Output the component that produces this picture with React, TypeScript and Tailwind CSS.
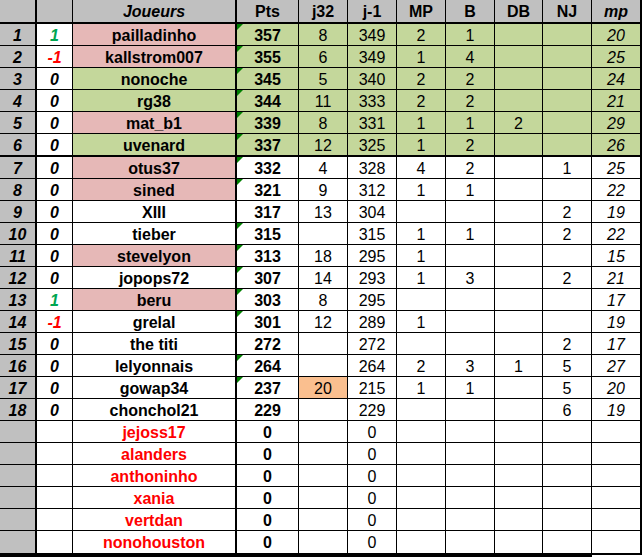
import React from 'react';

// column widths include the right border of each cell
const colW = [
  'w-[37px] border-r-2',
  'w-[36px] border-r',
  'w-[164px] border-r-2',
  'w-[62px] border-r',
  'w-[49px] border-r',
  'w-[49px] border-r',
  'w-[49px] border-r',
  'w-[49px] border-r',
  'w-[48px] border-r',
  'w-[49px] border-r',
  'w-[50px] border-r-2',
];

const PINK = 'bg-[#e6b8b7]';
const GREEN = 'bg-[#c4d79b]';
const GRAY = 'bg-[#c0c0c0]';

type Row = {
  ch: string;
  name: string;
  nameBg: string;
  cells: string[]; // pts, j32, j-1, MP, B, DB, NJ, mp
  top?: boolean;
  tri?: boolean;
  orange?: boolean;
};

const rows: Row[] = [
  { ch: '1', name: 'pailladinho', nameBg: PINK, cells: ['357', '8', '349', '2', '1', '', '', '20'], top: true, tri: true },
  { ch: '-1', name: 'kallstrom007', nameBg: PINK, cells: ['355', '6', '349', '1', '4', '', '', '25'], top: true, tri: true },
  { ch: '0', name: 'nonoche', nameBg: GREEN, cells: ['345', '5', '340', '2', '2', '', '', '24'], top: true, tri: true },
  { ch: '0', name: 'rg38', nameBg: GREEN, cells: ['344', '11', '333', '2', '2', '', '', '21'], top: true, tri: true },
  { ch: '0', name: 'mat_b1', nameBg: PINK, cells: ['339', '8', '331', '1', '1', '2', '', '29'], top: true, tri: true },
  { ch: '0', name: 'uvenard', nameBg: GREEN, cells: ['337', '12', '325', '1', '2', '', '', '26'], top: true, tri: true },
  { ch: '0', name: 'otus37', nameBg: PINK, cells: ['332', '4', '328', '4', '2', '', '1', '25'], tri: true },
  { ch: '0', name: 'sined', nameBg: PINK, cells: ['321', '9', '312', '1', '1', '', '', '22'], tri: true },
  { ch: '0', name: 'XIII', nameBg: 'bg-white', cells: ['317', '13', '304', '', '', '', '2', '19'] },
  { ch: '0', name: 'tieber', nameBg: 'bg-white', cells: ['315', '', '315', '1', '1', '', '2', '22'], tri: true },
  { ch: '0', name: 'stevelyon', nameBg: PINK, cells: ['313', '18', '295', '1', '', '', '', '15'], tri: true },
  { ch: '0', name: 'jopops72', nameBg: 'bg-white', cells: ['307', '14', '293', '1', '3', '', '2', '21'], tri: true },
  { ch: '1', name: 'beru', nameBg: PINK, cells: ['303', '8', '295', '', '', '', '', '17'], tri: true },
  { ch: '-1', name: 'grelal', nameBg: 'bg-white', cells: ['301', '12', '289', '1', '', '', '', '19'], tri: true },
  { ch: '0', name: 'the titi', nameBg: 'bg-white', cells: ['272', '', '272', '', '', '', '2', '17'] },
  { ch: '0', name: 'lelyonnais', nameBg: 'bg-white', cells: ['264', '', '264', '2', '3', '1', '5', '27'], tri: true },
  { ch: '0', name: 'gowap34', nameBg: 'bg-white', cells: ['237', '20', '215', '1', '1', '', '5', '20'], tri: true, orange: true },
  { ch: '0', name: 'chonchol21', nameBg: 'bg-white', cells: ['229', '', '229', '', '', '', '6', '19'] },
];

const late = ['jejoss17', 'alanders', 'anthoninho', 'xania', 'vertdan', 'nonohouston'];

function Cell({
  i,
  h,
  bg = 'bg-white',
  className = '',
  children,
}: {
  i: number;
  h: string;
  bg?: string;
  className?: string;
  children?: React.ReactNode;
}) {
  return (
    <div className={`relative flex items-center justify-center pt-[2px] border-black shrink-0 ${colW[i]} ${h} ${bg} ${className}`}>
      {children}
    </div>
  );
}

function Tri() {
  return (
    <span className="absolute left-0 top-0 w-0 h-0 border-t-[6px] border-r-[6px] border-t-[#008000] border-r-transparent" />
  );
}

export default function App() {
  const header = ['', '', 'Joueurs', 'Pts', 'j32', 'j-1', 'MP', 'B', 'DB', 'NJ', 'mp'];

  return (
    <div
      className="w-[642px] h-[557px] bg-white text-black text-[16px] leading-none overflow-hidden"
      style={{ fontFamily: '"Liberation Sans", Arial, sans-serif' }}
    >
      {/* header */}
      <div className="flex">
        {header.map((t, i) => (
          <Cell key={i} i={i} h="h-[24px] border-b-2" bg={GRAY} className={`font-bold ${i === 2 || i === 10 ? 'italic' : ''}`}>
            {t}
          </Cell>
        ))}
      </div>

      {/* ranked players */}
      {rows.map((r, idx) => {
        const h = idx === 5 ? 'h-[23px] border-b-2' : 'h-[22px] border-b';
        const chColor = r.ch === '1' ? 'text-[#00a651]' : r.ch === '-1' ? 'text-[#ff0000]' : 'text-black';
        const cellBg = r.top ? GREEN : 'bg-white';
        return (
          <div key={idx} className="flex">
            <Cell i={0} h={h} bg={GRAY} className="font-bold italic">{idx + 1}</Cell>
            <Cell i={1} h={h} className={`font-bold italic ${chColor}`}>{r.ch}</Cell>
            <Cell i={2} h={h} bg={r.nameBg} className="font-bold">{r.name}</Cell>
            {r.cells.map((c, k) => (
              <Cell
                key={k}
                i={k + 3}
                h={h}
                bg={k === 1 && r.orange ? 'bg-[#fabf8f]' : cellBg}
                className={k === 0 ? 'font-bold' : k === 7 ? 'italic' : ''}
              >
                {k === 0 && r.tri && <Tri />}
                {c}
              </Cell>
            ))}
          </div>
        );
      })}

      {/* players with no points */}
      {late.map((n, idx) => {
        const last = idx === late.length - 1;
        const h = last ? 'h-[26px] border-b-4' : 'h-[22px] border-b';
        return (
          <div key={n} className="flex items-start">
            <Cell i={0} h={h} bg={GRAY} />
            <Cell i={1} h={h} />
            <Cell i={2} h={h} className="font-bold text-[#ff0000]">{n}</Cell>
            <Cell i={3} h={h} className="font-bold">0</Cell>
            <Cell i={4} h={h} />
            <Cell i={5} h={h}>0</Cell>
            <Cell i={6} h={h} />
            <Cell i={7} h={h} />
            <Cell i={8} h={h} />
            <Cell i={9} h={h} />
            <Cell i={10} h={last ? 'h-[24px] border-b-2' : h} />
          </div>
        );
      })}
    </div>
  );
}
